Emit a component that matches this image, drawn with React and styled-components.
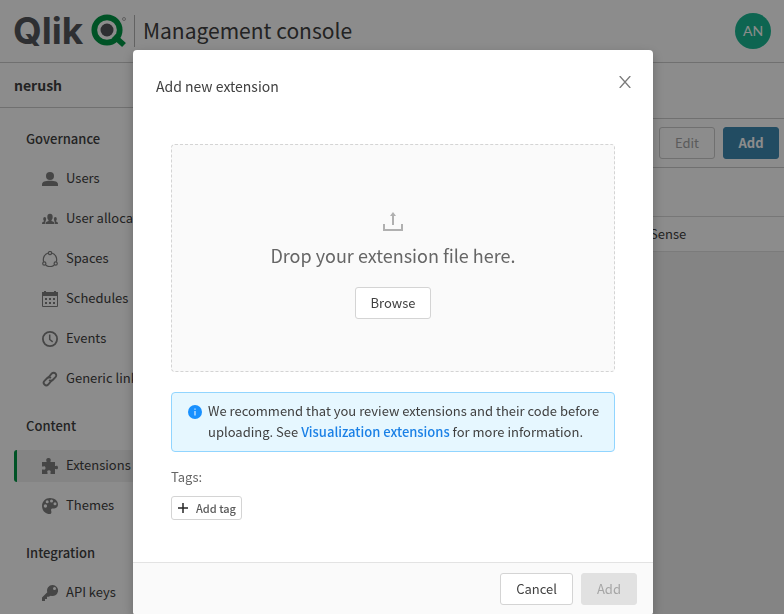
import React from "react";
import styled, { createGlobalStyle, css } from "styled-components";

const GlobalStyle = createGlobalStyle`
  * { box-sizing: border-box; }
  html, body { margin: 0; height: 100%; overflow: hidden; }
  body, button {
    font-family: "Noto Sans CJK SC", "Noto Sans", sans-serif;
    font-size: 13px;
    line-height: 20px;
    color: #404040;
  }
  button { cursor: pointer; }
  button:disabled { cursor: default; }
`;

const Page = styled.div`
  display: flex;
  flex-direction: column;
  height: 100vh;
  overflow: hidden;
  background: #fff;
`;

const TopBar = styled.header`
  display: flex;
  flex: none;
  align-items: center;
  height: 63px;
  padding: 0 13px;
  border-bottom: 1px solid #ccc;
`;

const Logo = styled.svg`
  display: block;
  width: 114px;
  height: 36px;
  overflow: visible;
`;

const AppTitle = styled.h1`
  flex: 1;
  margin: 0 0 0 7px;
  padding: 0 0 2px 8px;
  border-left: 1px solid #b3b3b3;
  font-size: 21px;
  font-weight: 400;
  line-height: 30px;
`;

const Avatar = styled.button`
  width: 36px;
  height: 36px;
  padding: 0;
  border: 0;
  border-radius: 50%;
  background: #1bb994;
  color: #fff;
  font-family: Lato, sans-serif;
  font-size: 14px;
`;

const Columns = styled.div`
  display: flex;
  flex: 1;
  min-height: 0;
`;

const Sidebar = styled.aside`
  flex: none;
  width: 240px;
  overflow: hidden;
`;

const Tenant = styled.div`
  height: 45px;
  padding: 0 14px;
  border-bottom: 1px solid #ccc;
  font-size: 14px;
  font-weight: 700;
  line-height: 44px;
`;

const Nav = styled.nav`
  padding: 8px 0 0 14px;
`;

const NavHeading = styled.h2`
  margin: 0;
  padding-left: 12px;
  font-size: 13px;
  font-weight: 500;
  line-height: 46px;
  height: 47px;
`;

const NavList = styled.ul`
  display: grid;
  gap: 8px;
  margin: 0 0 8px;
  padding: 0;
  list-style: none;
`;

const NavLink = styled.a`
  display: flex;
  align-items: center;
  gap: 8px;
  height: 32px;
  padding: 0 0 2px 25px;
  border-left: 3px solid transparent;
  border-radius: 3px;
  color: inherit;
  text-decoration: none;
  ${(p) => p.$active && css`
    border-left-color: #009845;
    background: #f0f0f0;
  `}
`;

const NavIcon = styled.svg`
  flex: none;
  width: 16px;
  height: 16px;
  margin-top: 2px;
  color: #808080;
`;

const Main = styled.main`
  flex: 1;
  padding-top: 55px;
  background: #fff;
`;

const Toolbar = styled.div`
  display: flex;
  align-items: center;
  justify-content: flex-end;
  gap: 8px;
  height: 50px;
  padding: 0 5px;
  border: solid #ccc;
  border-width: 1px 0;
`;

const variants = {
  plain: css`border-color: #d4d4d4; background: #fff; color: #404040;`,
  faded: css`border-color: #ccc; background: transparent; color: #a6a6a6;`,
  primary: css`border-color: #3f8ab3; background: #3f8ab3; color: #fff; font-weight: 700;`,
  disabled: css`border-color: #e1e1e1; background: #e1e1e1; color: #a6a6a6;`,
};

const Button = styled.button`
  min-width: 56px;
  height: 32px;
  padding: 0 15px;
  border: 1px solid;
  border-radius: 3px;
  font-weight: 400;
  ${(p) => variants[p.$variant || "plain"]}
`;

const ToolbarButton = styled(Button)`
  padding: 0 12px;
`;

const Table = styled.table`
  width: 100%;
  border-collapse: collapse;
  table-layout: fixed;
`;

const HeadCell = styled.th`
  height: 48px;
  padding: 0;
  border-bottom: 1px solid #d9d9d9;
  width: ${(p) => p.$width || "auto"};
`;

const Cell = styled.td`
  height: 35px;
  padding: 0;
  border-bottom: 1px solid #e0e0e0;
`;

const TableArea = styled.div`
  height: 100%;
  background: linear-gradient(#fff 83px, #f0f0f0 83px);
`;

const Overlay = styled.div`
  position: fixed;
  inset: 0;
  overflow: hidden;
  padding: 50px 0 0 2px;
  background: rgba(0, 0, 0, 0.45);
`;

const Dialog = styled.section`
  width: 520px;
  max-width: 100%;
  margin: 0 auto;
  border-radius: 4px;
  background: #fff;
  box-shadow: 0 4px 12px rgba(0, 0, 0, 0.25);
`;

const DialogHeader = styled.header`
  display: flex;
  align-items: flex-start;
  justify-content: space-between;
  height: 94px;
  padding: 20px 20px 0 23px;
`;

const DialogTitle = styled.h2`
  margin: 0;
  font-size: 14px;
  font-weight: 400;
  line-height: 32px;
`;

const CloseButton = styled.button`
  display: grid;
  place-items: center;
  width: 16px;
  height: 24px;
  padding: 0;
  border: 0;
  background: none;
  color: #7a7a7a;
`;

const DialogBody = styled.div`
  padding: 0 38px 42px;
`;

const DropZone = styled.div`
  display: flex;
  flex-direction: column;
  align-items: center;
  height: 228px;
  padding-top: 67px;
  border: 1px dashed #d4d4d4;
  border-radius: 4px;
  background: #fafafa;
`;

const DropText = styled.p`
  margin: 7px 0 16px;
  font-size: 18px;
  line-height: 32px;
  color: #666;
`;

const Notice = styled.div`
  display: flex;
  gap: 6px;
  margin-top: 20px;
  padding: 7px 8px 9px 16px;
  border: 1px solid #91d5ff;
  border-radius: 4px;
  background: #e6f7ff;
`;

const NoticeText = styled.p`
  margin: 0;
  line-height: 21px;
`;

const NoticeIcon = styled.svg`
  flex: none;
  width: 14px;
  height: 14px;
  margin-top: 5px;
`;

const NoticeLink = styled.a`
  color: #1a80e6;
  font-weight: 500;
  text-decoration: none;
`;

const TagLabel = styled.p`
  margin: 15px 0 9px;
  line-height: 20px;
  color: #666;
`;

const TagButton = styled.button`
  display: flex;
  align-items: center;
  gap: 8px;
  height: 24px;
  padding: 0 5px 1px 6px;
  border: 1px solid #d4d4d4;
  border-radius: 3px;
  background: #fff;
  color: #595959;
  font-size: 11px;
  font-weight: 500;
`;

const DialogFooter = styled.footer`
  display: flex;
  justify-content: flex-end;
  gap: 8px;
  padding: 10px 16px;
  border-top: 1px solid #e3e3e3;
  border-radius: 0 0 4px 4px;
  background: #fafafa;
`;

const icons = {
  user: (
    <g fill="currentColor">
      <circle cx="8" cy="5" r="4" />
      <path d="M0 15v-1.500C0 10.500 3 9.700 8 9.700s8 .8 8 3.800V15z" />
    </g>
  ),
  group: (
    <g fill="currentColor">
      <ellipse cx="8" cy="6" rx="2.700" ry="3.200" />
      <path d="M3.500 13c0-2 1-2.500 3-3v-2h3v2c2 .5 3 1 3 3z" />
      <ellipse cx="2.700" cy="8" rx="1.500" ry="2" />
      <ellipse cx="13.300" cy="8" rx="1.500" ry="2" />
      <path d="M0 13c0-1.500.5-2 2-2.400V9h1.500v1.500L2.800 13zM16 13c0-1.500-.5-2-2-2.400V9h-1.500v1.500l.7 2.500z" />
    </g>
  ),
  spaces: (
    <g fill="none" stroke="currentColor" strokeWidth="1.200">
      <path d="M6.200 2A6.800 6.800 0 0 0 1.700 10.700M9.800 2a6.800 6.800 0 0 1 4.500 8.700M3.700 14a7 7 0 0 0 8.600 0" />
      <circle cx="8" cy="2" r="1.600" />
      <circle cx="2.300" cy="12.500" r="1.600" />
      <circle cx="13.700" cy="12.500" r="1.600" />
    </g>
  ),
  calendar: (
    <g fill="currentColor">
      <path d="M0 1h2V0h2v1h8V0h2v1h2v4H0z" />
      <path d="M0 5h1v10h14V5h1v10q0 1-1 1H1q-1 0-1-1z" />
      <path d="M3 7h2v2H3zM7 7h2v2H7zM11 7h2v2h-2zM3 11h2v2H3zM7 11h2v2H7zM11 11h2v2h-2z" />
    </g>
  ),
  clock: (
    <g fill="none" stroke="currentColor">
      <circle cx="8" cy="8" r="7.100" strokeWidth="1.800" />
      <path d="M7.700 3.500v5l3 2.300" strokeWidth="1.500" />
    </g>
  ),
  link: (
    <g fill="none" stroke="currentColor" strokeWidth="1.900" strokeLinecap="round">
      <path d="M6.500 6.300l3.300-3.800a2.600 2.600 0 0 1 3.700 3.700l-2.800 2.800a2.600 2.600 0 0 1-3 .4" />
      <path d="M9.500 9.700l-3.300 3.800a2.600 2.600 0 0 1-3.700-3.700l2.800-2.800a2.600 2.600 0 0 1 3-.4" />
    </g>
  ),
  puzzle: (
    <path
      fill="currentColor"
      d="M0 4h4.500V3C4 2.500 4 0 6.500 0S9 2.500 8.500 3v1H13v4h1c.5-.6 2-.5 2 1.500s-1.500 2.200-2 1.500h-1v5H8.500v-1.500c.5-.8.200-2.200-1.500-2.200s-2.200 1.400-1.500 2.200V16H0v-4.500h1.500c.8.500 2 .2 2-1.500s-1.200-2-2-1.500H0z"
    />
  ),
  palette: (
    <path
      fill="currentColor"
      fillRule="evenodd"
      d="M8 0c4.500 0 8 2.800 8 6.300 0 3.200-2.200 4.200-4.600 4.200-2 0-2.700.8-2.200 2.300.5 1.700.2 3.200-1.600 3.200C3.300 16 0 12.500 0 8s3.600-8 8-8zM3.400 6.300a1.700 1.700 0 1 0 0 3.400 1.700 1.700 0 0 0 0-3.400zM5.200 2.300a1.500 1.500 0 1 0 0 3 1.500 1.500 0 0 0 0-3zM9.500 1.500a1.500 1.500 0 1 0 0 3 1.500 1.500 0 0 0 0-3zM13 4.300a1.500 1.500 0 1 0 0 3 1.500 1.500 0 0 0 0-3z"
    />
  ),
  key: (
    <path
      fill="currentColor"
      fillRule="evenodd"
      d="M10.500 0A5.500 5.500 0 0 0 5.300 7.200L0 12.500V16h3v-2h2v-2.200h1.700L8.800 10.700A5.500 5.500 0 1 0 10.500 0zM12.500 2a1.500 1.500 0 1 1 0 3 1.500 1.500 0 0 1 0-3z"
    />
  ),
};

const sections = [
  {
    title: "Governance",
    items: [
      ["user", "Users"],
      ["group", "User allocation"],
      ["spaces", "Spaces"],
      ["calendar", "Schedules"],
      ["clock", "Events"],
      ["link", "Generic links"],
    ],
  },
  { title: "Content", items: [["puzzle", "Extensions"], ["palette", "Themes"]] },
  { title: "Integration", items: [["key", "API keys"]] },
];

function QlikLogo() {
  return (
    <Logo viewBox="0 0 114 36" role="img" aria-label="Qlik">
      <text x="0" y="31" fontFamily="Inter, sans-serif" fontSize="37" fontWeight="700" fill="#54565b">
        Qlik
      </text>
      <circle cx="94" cy="17" r="12.700" fill="none" stroke="#009845" strokeWidth="5.700" />
      <path d="M101 23l10 9" stroke="#009845" strokeWidth="5.700" />
      <circle cx="94" cy="17" r="6.500" fill="#54565b" />
      <circle cx="111" cy="6" r="1.500" fill="none" stroke="#999" strokeWidth="0.800" />
    </Logo>
  );
}

export default function App() {
  return (
    <>
      <GlobalStyle />
      <Page>
        <TopBar>
          <QlikLogo />
          <AppTitle>Management console</AppTitle>
          <Avatar type="button">AN</Avatar>
        </TopBar>
        <Columns>
          <Sidebar>
            <Tenant>nerush</Tenant>
            <Nav>
              {sections.map((s) => (
                <React.Fragment key={s.title}>
                  <NavHeading>{s.title}</NavHeading>
                  <NavList>
                    {s.items.map(([icon, label]) => (
                      <li key={label}>
                        <NavLink href="#" $active={label === "Extensions"}>
                          <NavIcon viewBox="0 0 16 16" aria-hidden="true">{icons[icon]}</NavIcon>
                          {label}
                        </NavLink>
                      </li>
                    ))}
                  </NavList>
                </React.Fragment>
              ))}
            </Nav>
          </Sidebar>
          <Main>
            <Toolbar>
              <ToolbarButton type="button" $variant="faded" disabled>Edit</ToolbarButton>
              <ToolbarButton type="button" $variant="primary">Add</ToolbarButton>
            </Toolbar>
            <TableArea>
              <Table>
                <thead>
                  <tr><HeadCell /><HeadCell $width="134px" /></tr>
                </thead>
                <tbody>
                  <tr><Cell /><Cell>Sense</Cell></tr>
                </tbody>
              </Table>
            </TableArea>
          </Main>
        </Columns>
      </Page>
      <Overlay>
        <Dialog role="dialog" aria-modal="true" aria-labelledby="dialog-title">
          <DialogHeader>
            <DialogTitle id="dialog-title">Add new extension</DialogTitle>
            <CloseButton type="button" aria-label="Close">
              <svg width="12" height="12" viewBox="0 0 12 12" fill="none" stroke="currentColor" strokeWidth="1.300">
                <path d="M.7 0l10.600 12M11.300 0L.7 12" />
              </svg>
            </CloseButton>
          </DialogHeader>
          <DialogBody>
            <DropZone>
              <svg width="20" height="20" viewBox="0 0 20 20" aria-hidden="true">
                <path d="M1 12v6h18v-6" fill="none" stroke="#b0b0b0" strokeWidth="2" />
                <path d="M9 13V4H7l3-4 3 4h-2v9z" fill="#b0b0b0" />
              </svg>
              <DropText>Drop your extension file here.</DropText>
              <Button type="button">Browse</Button>
            </DropZone>
            <Notice>
              <NoticeIcon viewBox="0 0 14 14" aria-hidden="true">
                <circle cx="7" cy="7" r="7" fill="#1890ff" />
                <path d="M6.500 3.500h1v1.200h-1zM6.500 6h1v4.500h-1z" fill="#fff" />
              </NoticeIcon>
              <NoticeText>
                We recommend that you review extensions and their code before uploading. See{" "}
                <NoticeLink href="#">Visualization extensions</NoticeLink> for more information.
              </NoticeText>
            </Notice>
            <TagLabel>Tags:</TagLabel>
            <TagButton type="button">
              <svg width="10" height="10" viewBox="0 0 10 10" stroke="#262626" strokeWidth="1.500" aria-hidden="true">
                <path d="M0 5h10M5 0v10" />
              </svg>
              Add tag
            </TagButton>
          </DialogBody>
          <DialogFooter>
            <Button type="button">Cancel</Button>
            <Button type="button" $variant="disabled" disabled>Add</Button>
          </DialogFooter>
        </Dialog>
      </Overlay>
    </>
  );
}
